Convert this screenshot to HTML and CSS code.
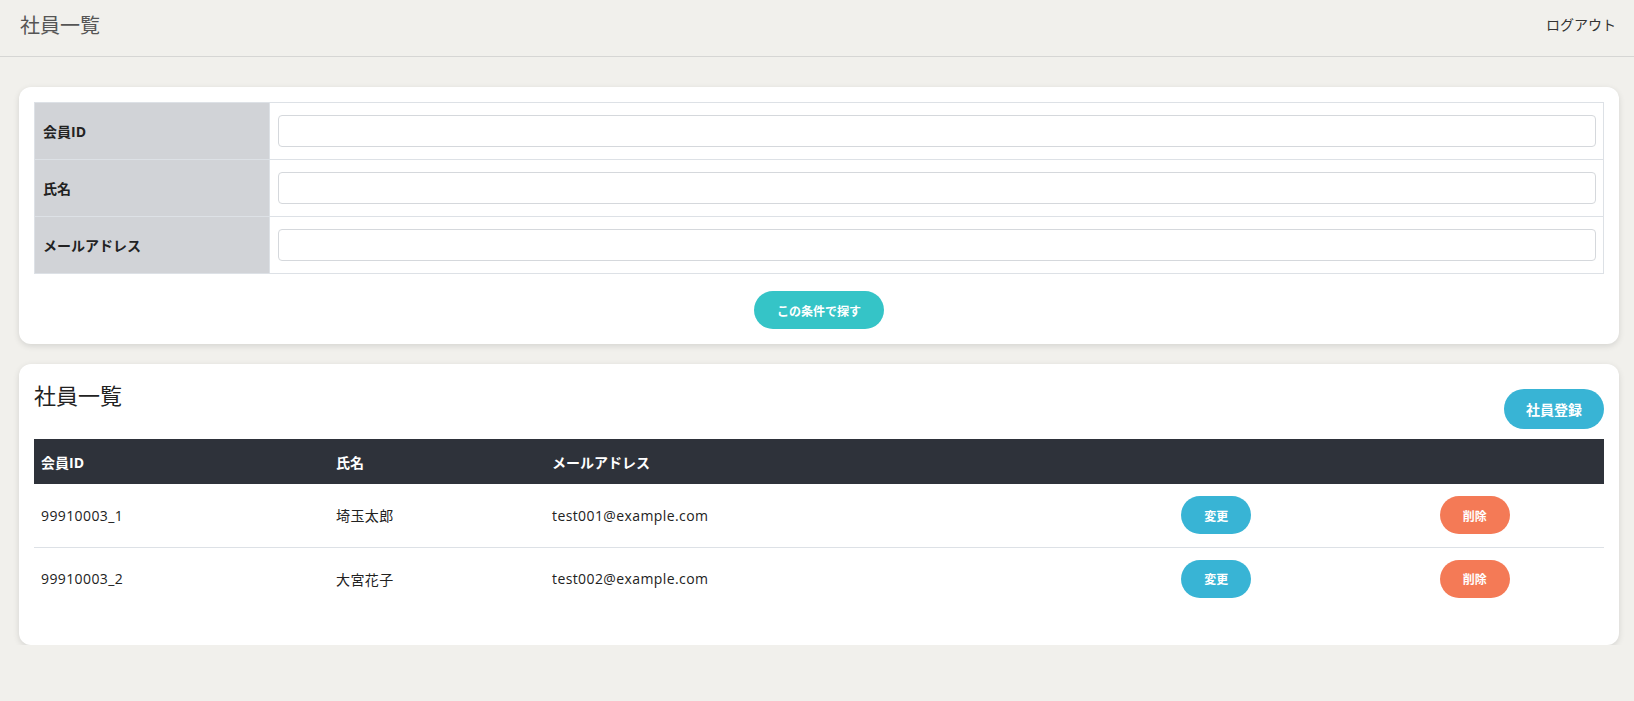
FILE: index.html
```html
<!DOCTYPE html>
<html lang="ja">
<head>
<meta charset="utf-8">
<title>社員一覧</title>
<link rel="stylesheet" href="styles.css">
</head>
<body>
<header class="topbar">
  <h1 class="topbar-title">社員一覧</h1>
  <a class="logout" href="#">ログアウト</a>
</header>
<main class="main">
  <section class="card search-card">
    <table class="search-table">
      <tr>
        <th>会員ID</th>
        <td><input class="text-input" type="text"></td>
      </tr>
      <tr>
        <th>氏名</th>
        <td><input class="text-input" type="text"></td>
      </tr>
      <tr>
        <th>メールアドレス</th>
        <td><input class="text-input" type="text"></td>
      </tr>
    </table>
    <div class="search-actions">
      <button class="btn btn-teal btn-search">この条件で探す</button>
    </div>
  </section>

  <section class="card list-card">
    <div class="list-head">
      <h2 class="list-title">社員一覧</h2>
      <button class="btn btn-blue btn-register">社員登録</button>
    </div>
    <table class="list-table">
      <colgroup>
        <col class="c-id">
        <col class="c-name">
        <col class="c-mail">
        <col class="c-act">
        <col class="c-act">
      </colgroup>
      <thead>
        <tr>
          <th>会員ID</th>
          <th>氏名</th>
          <th>メールアドレス</th>
          <th></th>
          <th></th>
        </tr>
      </thead>
      <tbody>
        <tr>
          <td>99910003_1</td>
          <td>埼玉太郎</td>
          <td>test001@example.com</td>
          <td class="act"><button class="btn btn-blue btn-small">変更</button></td>
          <td class="act"><button class="btn btn-orange btn-small">削除</button></td>
        </tr>
        <tr>
          <td>99910003_2</td>
          <td>大宮花子</td>
          <td>test002@example.com</td>
          <td class="act"><button class="btn btn-blue btn-small">変更</button></td>
          <td class="act"><button class="btn btn-orange btn-small">削除</button></td>
        </tr>
      </tbody>
    </table>
  </section>
</main>
</body>
</html>
```

FILE: styles.css
```css
* {
  box-sizing: border-box;
}

body {
  margin: 0;
  background: #f1f0ec;
  font-family: "Open Sans", "Noto Sans CJK JP", sans-serif;
  color: #222;
}

.topbar {
  height: 57px;
  border-bottom: 1px solid #d6d6d4;
  display: flex;
  align-items: center;
  justify-content: space-between;
  padding: 0 18px 8px 20px;
}

.topbar-title {
  margin: 0;
  font-size: 20px;
  font-weight: 400;
  color: #555;
  font-family: "Noto Sans CJK JP", sans-serif;
}

.logout {
  font-size: 14px;
  color: #333;
  text-decoration: none;
  font-family: "Noto Sans CJK JP", sans-serif;
}

.main {
  padding: 30px 15px 0 19px;
  display: flex;
  flex-direction: column;
  gap: 20px;
}

.card {
  background: #fff;
  border-radius: 12px;
  box-shadow: 0 2px 6px rgba(0, 0, 0, 0.12);
  padding: 15px;
}

.search-table {
  width: 100%;
  border-collapse: collapse;
  border: 1px solid #dde1e6;
}

.search-table th,
.search-table td {
  border: 1px solid #dde1e6;
  height: 57px;
}

.search-table th {
  width: 15%;
  background: #d1d3d7;
  text-align: left;
  font-size: 14px;
  font-weight: 700;
  padding: 0 8px;
  color: #222;
}

.search-table td {
  padding: 12px 7px 12px 8px;
}

.text-input {
  display: block;
  width: 100%;
  height: 32px;
  border: 1px solid #d5d8dc;
  border-radius: 4px;
  background: #fff;
  font-size: 14px;
  padding: 0 8px;
}

.search-actions {
  display: flex;
  justify-content: center;
  margin-top: 17px;
}

.btn {
  border: none;
  color: #fff;
  font-family: "Noto Sans CJK JP", sans-serif;
  font-weight: 700;
  border-radius: 999px;
  cursor: pointer;
}

.btn-teal {
  background: #35c4c7;
}

.btn-blue {
  background: #38b4d5;
}

.btn-orange {
  background: #f47a56;
}

.btn-search {
  width: 130px;
  height: 38px;
  font-size: 12px;
}

.list-head {
  display: flex;
  justify-content: space-between;
  align-items: flex-start;
}

.list-title {
  margin: 0;
  font-size: 22px;
  line-height: 30px;
  font-weight: 400;
  color: #222;
  font-family: "Noto Sans CJK JP", sans-serif;
}

.btn-register {
  margin-top: 10px;
  width: 100px;
  height: 40px;
  font-size: 14px;
}

.list-table {
  width: 100%;
  margin-top: 10px;
  margin-bottom: 20px;
  border-collapse: collapse;
  table-layout: fixed;
}

.c-id { width: 295px; }
.c-name { width: 216px; }
.c-mail { width: 542px; }

.list-table thead th {
  background: #2e323a;
  color: #fff;
  height: 45px;
  text-align: left;
  font-size: 14px;
  font-weight: 700;
  padding: 0 7px;
}

.list-table td {
  height: 63px;
  padding: 12px 7px;
  font-size: 14px;
  letter-spacing: 0.4px;
  color: #222;
  border-bottom: 1px solid #dde1e6;
}

.list-table tbody tr:last-child td {
  border-bottom: none;
}

.list-table td.act {
  text-align: center;
  letter-spacing: 0;
}

.btn-small {
  width: 70px;
  height: 38px;
  font-size: 12px;
  vertical-align: middle;
}
```
